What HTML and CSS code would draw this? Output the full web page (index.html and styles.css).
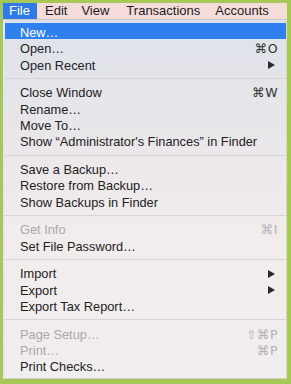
FILE: index.html
```html
<!DOCTYPE html>
<html>
<head>
<meta charset="utf-8">
<link rel="stylesheet" href="styles.css">
</head>
<body>
<div class="frame">
  <div class="menubar">
    <span class="mb-item active">File</span>
    <span class="mb-item">Edit</span>
    <span class="mb-item">View</span>
    <span class="mb-item">Transactions</span>
    <span class="mb-item">Accounts</span>
  </div>
  <div class="panel">
    <div class="row selected"><span>New…</span></div>
    <div class="row"><span>Open…</span><span class="sc">⌘O</span></div>
    <div class="row"><span>Open Recent</span><span class="arrow"></span></div>
    <div class="sep"></div>
    <div class="row"><span>Close Window</span><span class="sc">⌘W</span></div>
    <div class="row"><span>Rename…</span></div>
    <div class="row"><span>Move To…</span></div>
    <div class="row"><span>Show “Administrator's Finances” in Finder</span></div>
    <div class="sep"></div>
    <div class="row"><span>Save a Backup…</span></div>
    <div class="row"><span>Restore from Backup…</span></div>
    <div class="row"><span>Show Backups in Finder</span></div>
    <div class="sep"></div>
    <div class="row disabled"><span>Get Info</span><span class="sc">⌘I</span></div>
    <div class="row"><span>Set File Password…</span></div>
    <div class="sep"></div>
    <div class="row"><span>Import</span><span class="arrow"></span></div>
    <div class="row"><span>Export</span><span class="arrow"></span></div>
    <div class="row"><span>Export Tax Report…</span></div>
    <div class="sep"></div>
    <div class="row disabled"><span>Page Setup…</span><span class="sc">⇧⌘P</span></div>
    <div class="row disabled"><span>Print…</span><span class="sc">⌘P</span></div>
    <div class="row"><span>Print Checks…</span></div>
  </div>
</div>
</body>
</html>
```
FILE: styles.css
```css
* {
  box-sizing: border-box;
}
html, body {
  margin: 0;
  padding: 0;
}
body {
  width: 291px;
  height: 384px;
  background: #a6c856;
  font-family: "Liberation Sans", Arial, sans-serif;
  overflow: hidden;
}
.frame {
  padding: 3px 4px 5px 3px;
  height: 384px;
  display: flex;
  flex-direction: column;
}
.menubar {
  height: 17px;
  background: #f5dcdb;
  display: flex;
  align-items: flex-start;
  font-size: 13px;
  color: #1d1d1d;
  border-bottom: 1px solid #c9c9cc;
}
.mb-item {
  padding: 0 6px;
  line-height: 16px;
  height: 16px;
}
.mb-item.active {
  background: #2f7ae8;
  color: #fff;
  padding: 0 6px;
  width: 34px;
}
.mb-item:nth-child(2) { margin-left: 2px; }
.mb-item:nth-child(3) { margin-left: 2px; }
.mb-item:nth-child(4) { margin-left: 5px; }
.mb-item:nth-child(5) { margin-left: 3px; }
.panel {
  flex: 1;
  background: linear-gradient(180deg, #dde2ea 0%, #e9e6ea 30%, #f2ecec 60%, #f1eeef 100%);
  border-left: 2px solid #e6e6ea;
  border-right: 1px solid #d8d8dc;
  border-bottom: 1px solid #cfcfd2;
  padding-top: 3px;
  font-size: 12.8px;
  color: #222;
}
.row {
  height: 16.4px;
  display: flex;
  align-items: center;
  justify-content: space-between;
  padding: 1px 8px 0 15px;
  white-space: nowrap;
}
.row.selected {
  background: #2f80ee;
  color: #fff;
  height: 16px;
  padding-top: 2px;
  margin-bottom: 1px;
}
.row.disabled {
  color: #a9a8aa;
}
.sc {
  font-family: "DejaVu Sans", "Liberation Sans", sans-serif;
  font-size: 12.5px;
  letter-spacing: 0.5px;
  color: #333;
}
.row.disabled .sc {
  color: #b2b1b3;
}
.arrow {
  width: 0;
  height: 0;
  border-top: 4.5px solid transparent;
  border-bottom: 4.5px solid transparent;
  border-left: 7px solid #2a2a2a;
  margin-right: 3px;
}
.sep {
  height: 11.2px;
  display: flex;
  align-items: center;
}
.sep::after {
  content: "";
  flex: 1;
  height: 1px;
  background: #d6d4d6;
}
```
